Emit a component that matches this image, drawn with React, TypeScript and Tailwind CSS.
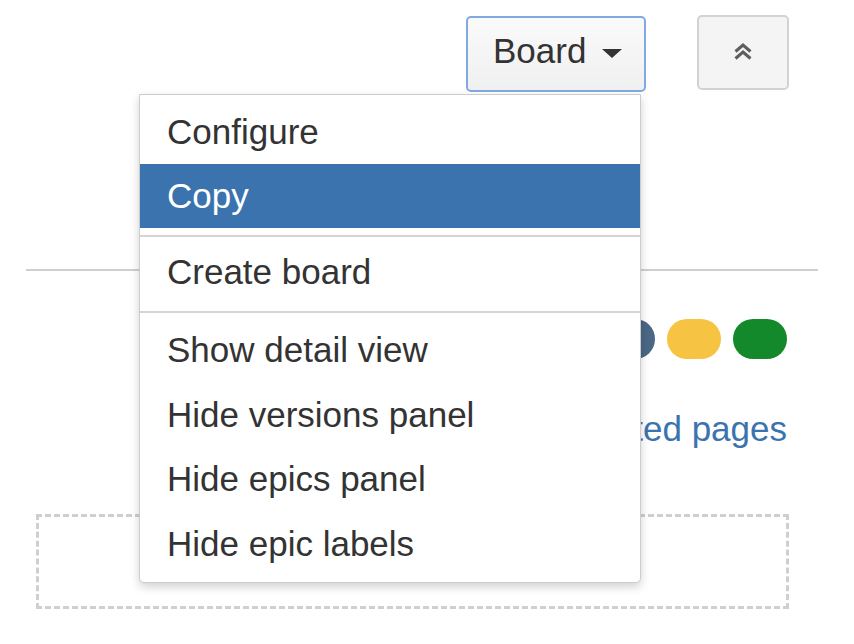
import React from 'react';

const menuSections: { items: string[]; className: string; rowClass: string }[] = [
  { items: ['Configure', 'Copy'], className: 'pt-[5px] pb-[7px]', rowClass: 'h-[64px]' },
  { items: ['Create board'], className: 'border-t-2 border-[#d4d4d4] pt-[3px] pb-[7px]', rowClass: 'h-[64px]' },
  {
    items: ['Show detail view', 'Hide versions panel', 'Hide epics panel', 'Hide epic labels'],
    className: 'border-t-2 border-[#d4d4d4] pt-[5px] pb-[6px]',
    rowClass: 'h-[64.5px]',
  },
];

const ChevronsUp = () => (
  <svg width="20" height="19" viewBox="0 0 20 19" fill="none">
    <polyline points="2.5,9.5 10,3 17.5,9.5" stroke="#5e5e5e" strokeWidth="3" />
    <polyline points="2.5,16.5 10,10 17.5,16.5" stroke="#5e5e5e" strokeWidth="3" />
  </svg>
);

export default function App() {
  return (
    <div
      className="relative w-[854px] h-[644px] overflow-hidden bg-white text-[#333] leading-[normal]"
      style={{ fontFamily: '"Liberation Sans", Arial, sans-serif' }}
    >
      {/* toolbar */}
      <div className="flex justify-end items-start gap-[51px] pt-[15px] pr-[65px]">
        <button className="mt-[1px] h-[76px] w-[180px] flex items-center pl-[25px] pr-[22px] pb-[6px] rounded-[5px] border-2 border-[#80a9e3] bg-gradient-to-b from-[#fafafa] to-[#f0f0f0] text-[35px] text-[#333]">
          <span>Board</span>
          <span className="ml-[16px] mt-[5px] w-0 h-0 border-t-[9px] border-t-[#333] border-x-[10px] border-x-transparent" />
        </button>
        <button className="h-[75px] w-[92px] flex items-center justify-center pb-[2px] rounded-[5px] border-2 border-[#d2d2d2] bg-[#f4f4f4]">
          <ChevronsUp />
        </button>
      </div>

      <div className="mt-[177px] ml-[26px] mr-[36px] h-[2px] bg-[#cfcfcf]" />

      {/* status lozenges */}
      <div className="mt-[48px] flex justify-end gap-[12px] pr-[67px]">
        <div className="w-[54px] h-[40px] rounded-full bg-[#4a6785]" />
        <div className="w-[54px] h-[40px] rounded-full bg-[#f6c342]" />
        <div className="w-[54px] h-[40px] rounded-full bg-[#14892c]" />
      </div>

      <div className="mt-[50px] pr-[67px] text-right text-[35px] text-[#3b73af]">Related pages</div>

      <div className="mt-[65px] ml-[36px] mr-[65px] h-[95px] border-[3px] border-dashed border-[#cfcfcf]" />

      {/* dropdown menu */}
      <div className="absolute left-[139px] top-[94px] w-[502px] bg-white border border-[#cccccc] rounded-b-[5px] shadow-[0_4px_10px_rgba(0,0,0,0.18)] text-[35px]">
        {menuSections.map((section, si) => (
          <ul key={si} className={section.className}>
            {section.items.map((item) => (
              <li
                key={item}
                className={`${section.rowClass} flex items-center pl-[27px] ${
                  item === 'Copy' ? 'bg-[#3b73af] text-white' : 'text-[#333]'
                }`}
              >
                {item}
              </li>
            ))}
          </ul>
        ))}
      </div>
    </div>
  );
}
